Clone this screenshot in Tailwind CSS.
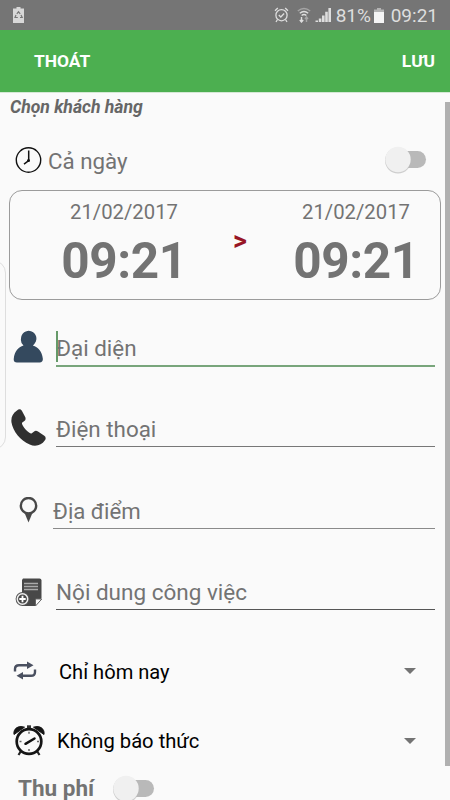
<!DOCTYPE html>
<html lang="vi">
<head>
<meta charset="utf-8">
<title>Lịch hẹn</title>
<script src="https://cdn.jsdelivr.net/npm/@tailwindcss/browser@4"></script>
</head>
<body class="bg-[#fafafa]">
<div class="relative w-[450px] h-[800px] overflow-hidden bg-[#fafafa] font-['Roboto',sans-serif] text-[#737373] flex flex-col">

  <div class="h-[30px] shrink-0 bg-[#757575] flex items-center pl-[13px] pr-[12px] text-[#dedede]">
    <svg class="w-[11px] h-[16px] mt-[-1px]" viewBox="0 0 11 16"><path d="M3.5 0h4v1.600H11V16H0V1.600h3.500z" fill="#d8d8d8"/><path d="M3.800 6.800 5.500 4.800l1.700 2M8 8l1.200 2.500H7M4.800 10.500H2L3 8" fill="none" stroke="#777" stroke-width="1.200"/></svg>
    <div class="flex-1"></div>
    <svg class="w-[15px] h-[16px] mr-[8px]" viewBox="0 0 15 16" fill="none" stroke="#dedede" stroke-width="1.300"><circle cx="7.500" cy="8.200" r="5.600"/><path d="M1 3.800 3.800 1M14 3.800 11.200 1M3.500 12.500 2 15M11.500 12.500 13 15M4.800 8l2 2 3.300-3.500"/></svg>
    <svg class="w-[14px] h-[16px] mr-[4px]" viewBox="0 0 14 16" fill="none" stroke="#dedede" stroke-width="1.400"><path d="M.8 4Q7-1 13.200 4" stroke="#a5a5a5"/><path d="M2.800 6.300Q7 2.800 11.200 6.300M4.600 8.500Q7 6.500 9.400 8.500"/><path d="M4.500 10v5M2.800 13l1.700 2 1.700-2"/><path d="M9.500 15v-5M8 12l1.500-2 1.500 2" stroke="#a5a5a5"/></svg>
    <svg class="w-[17px] h-[16px] mr-[4px]" viewBox="0 0 17 16" fill="#dedede"><path d="M.5 13.500h2.500V15H.5zM3.800 11.500h2.600V15H3.800zM7 8.500h2.600V15H7zM10.200 4.800h2.600V15h-2.600zM13.400 1H16v14h-2.600z"/></svg>
    <span class="text-[19px] leading-[30px] pt-[2px] w-[34px] whitespace-nowrap">81%</span>
    <svg class="w-[10px] h-[15px] ml-[4px] mr-[7px]" viewBox="0 0 10 15"><path d="M3 0h4v1.500h3V15H0V1.500h3z" fill="#b4b4b4"/><path d="M0 4h10v11H0z" fill="#f5f5f5"/></svg>
    <span class="text-[19px] leading-[30px] pt-[2px] whitespace-nowrap">09:21</span>
  </div>

  <div class="h-[62px] shrink-0 bg-[#4caf50] flex items-center justify-between pl-[34px] pr-[15px] text-white font-bold text-[17.400px]">
    <span>THOÁT</span><span>LƯU</span>
  </div>

  <div class="h-[31px] shrink-0 pl-[10px] pt-[2px] border-t border-[#d5e8d5] text-[17.600px] leading-[24px] font-bold italic text-[#666]">Chọn khách hàng</div>

  <div class="h-[67px] shrink-0 flex items-center pt-[7px] pl-[15px] pr-[23px]">
    <svg class="w-[27px] h-[27px] shrink-0" viewBox="0 0 27 27"><circle cx="13.500" cy="13" r="12.200" fill="none" stroke="#111" stroke-width="1.400"/><path d="M13.700 3.500v10.200L9 17.200" fill="none" stroke="#111" stroke-width="1.500"/><circle cx="13.500" cy="13.600" r="1.500" fill="#111"/></svg>
    <span class="ml-[6px] mt-[2px] text-[22.300px] leading-[28px]">Cả ngày</span>
    <svg class="w-[43px] h-[30px] ml-auto" viewBox="0 0 43 30"><rect x="7" y="6" width="35" height="17" rx="8.500" fill="#b9b9b9"/><circle cx="14" cy="15.500" r="13" fill="#bbb" opacity=".7"/><circle cx="14" cy="14.500" r="12.700" fill="#f0f0f0"/></svg>
  </div>

  <div class="ml-[9px] w-[432px] h-[110px] shrink-0 border border-[#9b9b9b] rounded-[13px] flex justify-between pl-[50px] pr-[20px]">
    <div class="w-[128px] flex flex-col items-center pt-[8px]">
      <span class="text-[20.300px] leading-[26px]">21/02/2017</span>
      <span class="text-[49.500px] leading-[56px] mt-[8px] font-bold tracking-[-0.4px]">09:21</span>
    </div>
    <span class="text-[27px] leading-[32px] font-bold text-[#971525] pt-[34px]">&gt;</span>
    <div class="w-[128px] flex flex-col items-center pt-[8px]">
      <span class="text-[20.300px] leading-[26px]">21/02/2017</span>
      <span class="text-[49.500px] leading-[56px] mt-[8px] font-bold tracking-[-0.4px]">09:21</span>
    </div>
  </div>

  <div class="h-[67px] shrink-0 flex items-end pl-[13px] pr-[15px]">
    <svg class="w-[31px] h-[33px] mb-[4px] shrink-0" viewBox="0 0 31 33"><path d="M8 8.500a7.700 7.700 0 1 1 14 4.500q-1 1.600-2.200 2.500c5.500 1.500 9.200 6 10 13 .3 2.600-.7 4-3.200 4H4c-2.600 0-3.600-1.400-3.200-4C1.500 21.500 5.200 17 10.500 15.500A7.700 7.700 0 0 1 8 8.500z" fill="#34495e"/></svg>
    <div class="ml-[12px] flex-1 h-[36px] border-b-2 border-[#78a57b] relative text-[22.400px] leading-[34px]">Đại diện<div class="absolute left-0 top-0 w-[2px] h-[31px] bg-[#669a69]"></div></div>
  </div>

  <div class="h-[80px] shrink-0 flex items-end pl-[11px] pr-[15px]">
    <svg class="w-[36px] h-[38px] shrink-0" viewBox="0 0 36 38"><path d="M6 1.500c2-1.800 4-1.300 5 .5l3.200 6c.8 1.800.3 3.300-1.200 4.300l-2 1.500c-.7 2.500 6.500 10.800 9.500 10.700l2.300-1.800c1.400-1.200 2.700-1.200 4.200-.2l6.300 4.300c1.600 1.200 1.900 2.900.4 4.800-3 4.500-9 6.700-15 4C9 31.500 2 22 .5 13.500-.2 8.500 1.500 4.500 6 1.500z" fill="#303030"/></svg>
    <div class="ml-[9px] flex-1 h-[35px] border-b border-[#777] text-[22.400px] leading-[34px]">Điện thoại</div>
  </div>

  <div class="h-[82px] shrink-0 flex items-end pl-[19px] pr-[15px]">
    <svg class="w-[19px] h-[26px] mb-[6px] shrink-0" viewBox="0 0 19 26"><circle cx="9.500" cy="8.700" r="7.700" fill="none" stroke="#484848" stroke-width="2.400"/><path d="M5.500 15.800h8L9.500 25.500z" fill="#484848"/></svg>
    <div class="ml-[15px] flex-1 h-[35px] border-b border-[#8a8a8a] text-[22.200px] leading-[34px]">Địa điểm</div>
  </div>

  <div class="h-[81px] shrink-0 flex items-end pl-[15px] pr-[15px]">
    <svg class="w-[28px] h-[29px] mb-[3px] shrink-0" viewBox="0 0 28 29"><path d="M8 .5h16.500q2 0 2 2V20L20 28H7V2z" fill="#484848"/><path d="M9 5.500h14M9 8.500h14M9 11.500h14" stroke="#aaa" stroke-width="1.500"/><path d="M20.500 28v-7h6.300z" fill="#fafafa" stroke="#666"/><circle cx="7.500" cy="21" r="6.900" fill="#555"/><circle cx="7.500" cy="21" r="5.200" fill="#484848" stroke="#eee" stroke-width="1.500"/><path d="M7.500 17.800v6.400M4.300 21h6.400" stroke="#fff" stroke-width="1.800"/></svg>
    <div class="ml-[13px] flex-1 h-[35px] border-b border-[#555] text-[22.500px] leading-[34px]">Nội dung công việc</div>
  </div>

  <div class="h-[70px] mt-[26px] shrink-0 flex items-center pl-[13px] pr-[34px]">
    <svg class="w-[24px] h-[20px] shrink-0" viewBox="0 0 24 20"><g fill="none" stroke="#4a5060" stroke-width="2.400"><path d="M2 10.500V8q0-3.800 4-3.800h9"/><path d="M22 8.500V11q0 3.800-4 3.800H9"/></g><path d="M14 .5 20.500 4.200 14 8zM10 11l-6.500 3.800L10 18.500z" fill="#4a5060"/></svg>
    <span class="ml-[22px] mt-[2px] text-[20.100px] leading-[26px] text-black">Chỉ hôm nay</span>
    <svg class="w-[12px] h-[6px] ml-auto" viewBox="0 0 12 6"><path d="M0 0h12L6 6z" fill="#737373"/></svg>
  </div>

  <div class="h-[70px] shrink-0 flex items-center pl-[13px] pr-[34px]">
    <svg class="w-[32px] h-[31px] mt-[-2px] shrink-0" viewBox="0 0 32 31"><path d="M1 9.500C0 4 5 0 11.500 2.200zM31 9.500C32 4 27 0 20.500 2.200z" fill="#151515" stroke="#151515"/><path d="M14 .3h4v3h-4z" fill="#333"/><path d="m8 26-2.500 4M24 26l2.500 4" stroke="#222" stroke-width="2.200"/><circle cx="16" cy="16.500" r="12.300" fill="#fafafa" stroke="#151515" stroke-width="2.700"/><path d="m12.500 18.800 9-5.300" stroke="#111" stroke-width="2.500" stroke-linecap="round"/><path d="M16 6.800v2M16 24v2M6.500 16.500h2M24 16.500h2" stroke="#666" stroke-width="1.500"/></svg>
    <span class="ml-[12px] text-[20.200px] leading-[26px] text-black">Không báo thức</span>
    <svg class="w-[12px] h-[6px] ml-auto" viewBox="0 0 12 6"><path d="M0 0h12L6 6z" fill="#737373"/></svg>
  </div>

  <div class="h-[30px] mt-[-2px] shrink-0 flex items-start pl-[18px]">
    <span class="text-[22.500px] leading-[28px] font-bold">Thu phí</span>
    <svg class="w-[43px] h-[30px] ml-[18px]" viewBox="0 0 43 30"><rect x="7" y="6" width="35" height="17" rx="8.500" fill="#b9b9b9"/><circle cx="14" cy="15.500" r="13" fill="#bbb" opacity=".7"/><circle cx="14" cy="14.500" r="12.700" fill="#f0f0f0"/></svg>
  </div>

  <div class="absolute left-[-20px] top-[260px] w-[26px] h-[190px] border border-[#dedede] rounded-[20px]"></div>
  <div class="absolute right-0 top-[102px] w-[5px] h-[664px] bg-[#b0b0b0]"></div>
</div>
</body>
</html>
